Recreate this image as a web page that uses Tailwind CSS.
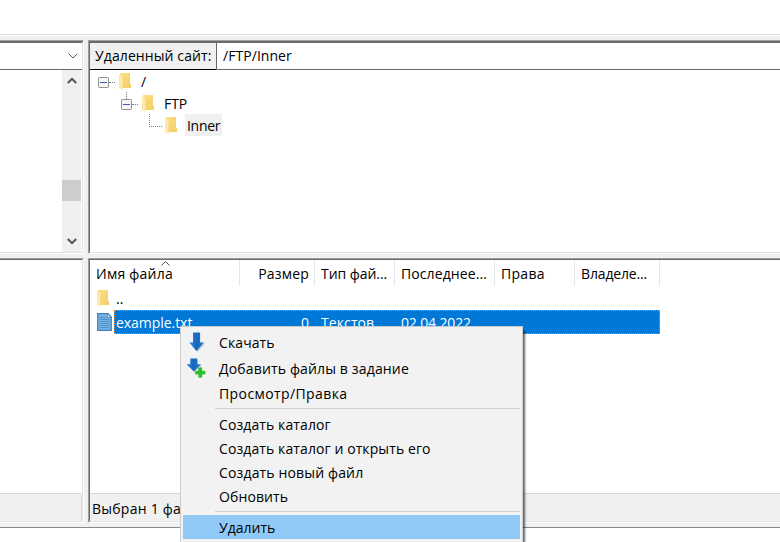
<!DOCTYPE html>
<html lang="ru">
<head>
<meta charset="utf-8">
<title>FTP</title>
<script src="https://cdn.jsdelivr.net/npm/@tailwindcss/browser@4"></script>
</head>
<body class="relative flex h-[542px] w-[780px] flex-col overflow-hidden bg-white font-['Open_Sans','Noto_Sans',sans-serif] text-[14px] leading-5 tracking-[0.1px] whitespace-nowrap text-black">
<svg class="absolute size-0" aria-hidden="true">
  <defs>
    <linearGradient id="gold" x2="1" y2="1"><stop stop-color="#fbe08b"/><stop offset="1" stop-color="#f3cd67"/></linearGradient>
    <linearGradient id="azure"><stop stop-color="#2a8ae2"/><stop offset=".5" stop-color="#1765bf"/><stop offset="1" stop-color="#2878d0"/></linearGradient>
    <symbol id="folder" viewBox="0 0 13 17">
      <path d="M1 0H11V11H12V15H1Z" fill="url(#gold)"/>
      <path d="M0 1L4 3.5V17L0 15Z" fill="#ffe9a6"/>
      <path d="M4 3.5V15" stroke="#efcb69" stroke-width=".6"/>
    </symbol>
    <symbol id="minus" viewBox="0 0 11 11">
      <rect x=".5" y=".5" width="10" height="10" rx=".7" fill="#f6f6f6" stroke="#919191"/>
      <path d="M2 5.5H9" stroke="#3f5fb0"/>
    </symbol>
  </defs>
</svg>

<div class="h-[34px] shrink-0"></div>
<div class="h-1.5 shrink-0 border-t border-[#e0e0e0] bg-[#f0f0f0] shadow-[inset_0_1px_0_#fff]"></div>

<div class="flex h-[214px] shrink-0 bg-[#f0f0f0]">
  <section class="flex w-[84px] flex-col border-t border-r border-b border-t-[#a0a0a0] border-r-white border-b-white">
    <div class="flex grow flex-col border-t-2 border-r border-b border-t-[#696969] border-r-[#e3e3e3] border-b-[#e3e3e3] bg-white">
      <div class="flex h-[27px] shrink-0 items-center justify-end border-b border-[#696969] pr-1">
        <svg class="h-[6px] w-[10px]" viewBox="0 0 10 6" fill="none" stroke="#555"><path d="M.7 .7L5 5L9.3 .7"/></svg>
      </div>
      <div class="flex grow justify-end">
        <div class="mr-px flex w-[19px] flex-col items-center bg-[#f0f0f0]">
          <svg class="mt-[7px] h-[7px] w-[10px] shrink-0" viewBox="0 0 10 7" fill="none" stroke="#505050" stroke-width="2"><path d="M.8 6L5 1.8L9.2 6"/></svg>
          <div class="mt-[96px] h-[21px] w-full shrink-0 bg-[#cdcdcd]"></div>
          <svg class="mt-[37px] h-[7px] w-[10px] shrink-0" viewBox="0 0 10 7" fill="none" stroke="#505050" stroke-width="2"><path d="M.8 1L5 5.2L9.2 1"/></svg>
        </div>
      </div>
    </div>
  </section>
  <div class="w-1 shrink-0"></div>
  <section class="flex grow border-t border-b border-l border-t-[#a0a0a0] border-b-white border-l-[#a0a0a0]">
    <div class="flex grow flex-col border-t-2 border-b border-l border-t-[#696969] border-b-[#e3e3e3] border-l-[#696969] bg-white">
      <div class="flex h-[27px] shrink-0">
        <div class="flex w-[126px] items-center border-b border-black bg-[#f0f0f0] pl-[5px]">Удаленный сайт:</div>
        <div class="flex grow items-center border-b border-l border-[#696969] pl-[6px] tracking-[0.05px]">/FTP/Inner</div>
      </div>
      <div class="flex h-[22px] items-center pt-[2px] pl-2">
        <svg class="size-[11px]"><use href="#minus"/></svg>
        <span class="w-[6px] border-t border-dotted border-[#808080]"></span>
        <svg class="mb-[2px] ml-1 h-[17px] w-[13px]"><use href="#folder"/></svg>
        <span class="ml-[9px]">/</span>
      </div>
      <div class="relative flex h-[22px] items-center pt-[2px] pl-[31px]">
        <span class="absolute top-0 left-[36px] h-[7px] border-l border-dotted border-[#808080]"></span>
        <svg class="size-[11px]"><use href="#minus"/></svg>
        <span class="w-[6px] border-t border-dotted border-[#808080]"></span>
        <svg class="mb-[2px] ml-1 h-[17px] w-[13px]"><use href="#folder"/></svg>
        <span class="ml-[9px] tracking-[-0.1px]">FTP</span>
      </div>
      <div class="flex h-[22px] pl-[59px]">
        <span class="h-[13px] w-[13px] border-b border-l border-dotted border-[#808080]"></span>
        <svg class="mt-[3px] ml-[3px] h-[17px] w-[13px]"><use href="#folder"/></svg>
        <span class="ml-[7px] h-[22px] w-[37px] bg-[#f0f0f0] pl-[2px] leading-[23px] tracking-[-0.3px]">Inner</span>
      </div>
    </div>
  </section>
</div>

<div class="h-1 shrink-0 bg-[#f0f0f0]"></div>

<div class="flex h-[265px] shrink-0 bg-[#f0f0f0]">
  <section class="flex w-[84px] border-t border-r border-b border-t-[#a0a0a0] border-r-white border-b-white">
    <div class="flex grow flex-col border-t border-r border-b border-t-[#696969] border-r-[#e3e3e3] border-b-[#e3e3e3] bg-white">
      <div class="grow"></div>
      <div class="flex h-7 items-center justify-end border-t border-[#d7d7d7] bg-[#f0f0f0]"><span class="h-[25px] w-px bg-[#d7d7d7]"></span></div>
    </div>
  </section>
  <div class="w-1 shrink-0"></div>
  <section class="flex grow border-t border-b border-l border-t-[#a0a0a0] border-b-white border-l-[#a0a0a0]">
    <div class="flex grow flex-col border-t border-b border-l border-t-[#696969] border-b-[#e3e3e3] border-l-[#696969] bg-white">
      <div class="grid h-[26px] w-[570px] grid-cols-[150px_75px_80px_100px_80px_85px] grid-rows-[26px] leading-[28px]">
        <div class="relative border-r border-[#e5e5e5] pl-[6px] tracking-[0.25px]">Имя файла
          <svg class="absolute top-[1px] left-[71px] h-[5px] w-[9px]" viewBox="0 0 9 5" fill="none" stroke="#555"><path d="M.4 4.5L4.5 .6L8.6 4.5"/></svg>
        </div>
        <div class="border-r border-[#e5e5e5] pr-[5px] text-right tracking-[0.2px]">Размер</div>
        <div class="border-r border-[#e5e5e5] pl-[6px] tracking-[-0.05px]">Тип фай...</div>
        <div class="border-r border-[#e5e5e5] pl-[6px]">Последнее...</div>
        <div class="border-r border-[#e5e5e5] pl-[6px] tracking-[0.3px]">Права</div>
        <div class="border-r border-[#e5e5e5] pl-[6px] tracking-[-0.15px]">Владеле...</div>
      </div>
      <div class="flex h-[24px] items-center pl-[7px]">
        <svg class="h-[17px] w-[13px]"><use href="#folder"/></svg>
        <span class="mt-[2px] ml-[6px]">..</span>
      </div>
      <div class="flex h-6 w-[570px]">
        <svg class="mt-[3px] ml-[6.5px] h-[18px] w-[15px] shrink-0" viewBox="0 0 15 18">
          <path d="M.7 .7H11L14.3 4V17.3H.7Z" fill="#77b3e4" stroke="#3f80bd" stroke-width="1.2"/>
          <path d="M10.5 .5V4.5H14.5Z" fill="#b8dbf5" stroke="#3f80bd" stroke-width=".7"/>
          <path d="M2.5 4.5H9M2.5 6.5H12.5M2.5 8.5H12.5M2.5 10.5H12.5M2.5 12.5H12.5M2.5 14.5H12.5" stroke="#4588c4" stroke-width=".8"/>
        </svg>
        <div class="ml-[2.5px] grid grow grid-cols-[125px_75px_80px_100px_164px] border border-dotted border-[#f08b32] bg-[#0078d7] leading-[24px] text-white">
          <span class="pl-[1px] tracking-[-0.05px]">example.txt</span>
          <span class="pr-[6px] text-right">0</span>
          <span class="pl-[6px]">Текстов</span>
          <span class="pl-[6px] tracking-[-0.15px]">02.04.2022</span>
        </div>
      </div>
      <div class="grow"></div>
      <div class="h-7 border-t border-[#d7d7d7] bg-[#f0f0f0] pl-[2px] leading-[30px] tracking-[0.25px]">Выбран 1 файл.</div>
    </div>
  </section>
</div>
<div class="h-[5px] shrink-0 border-b border-[#828790] bg-[#f0f0f0]"></div>

<nav class="absolute top-[326px] left-[180px] flex h-[230px] w-[343px] flex-col border border-[#ccc] bg-[#f2f2f2] p-[2px] shadow-[3px_4px_2px_-1px_rgba(0,0,0,0.6)]">
  <div class="flex h-[27px] items-center">
    <span class="flex w-[36px] pl-[6px]">
      <svg class="mb-[2px] h-5 w-[16px]" viewBox="0 0 16 20"><path d="M5.5 1.5H11.5V11.5H16L8.7 20L1.5 11.5H5.5Z" fill="#c9cdd2"/><path d="M4 .5H11V10.5H15L7.5 19L.3 10.5H4Z" fill="url(#azure)"/></svg>
    </span>
    Скачать
  </div>
  <div class="flex h-[26px] items-center tracking-[0.15px]">
    <span class="flex w-[36px] pl-[3px]">
      <svg class="mb-[2px] h-[20px] w-[20px]" viewBox="0 0 20 20"><path d="M5 1.5H12V7H16L9 14.5L1.5 7H5Z" fill="#c9cdd2"/><path d="M4.3 .5H11.3V6.2H15L7.8 13.5L.5 6.2H4.3Z" fill="url(#azure)"/><path d="M12.5 9.5H16V13H19.2V16.3H16V19.5H12.5V16.3H9.3V13H12.5Z" fill="#2bbd2b" stroke="#55cc55" stroke-width=".4"/></svg>
    </span>
    Добавить файлы в задание
  </div>
  <div class="h-6 pl-[36px] leading-6 tracking-[0.4px]">Просмотр/Правка</div>
  <div class="ml-8 h-[7px] pt-[2px]"><div class="h-px bg-[#d3d3d3]"></div></div>
  <div class="h-6 pl-[36px] leading-6">Создать каталог</div>
  <div class="h-6 pl-[36px] leading-6">Создать каталог и открыть его</div>
  <div class="h-6 pl-[36px] leading-6 tracking-[0.15px]">Создать новый файл</div>
  <div class="h-6 pl-[36px] leading-6">Обновить</div>
  <div class="ml-8 h-[6px] pt-[2px]"><div class="h-px bg-[#d3d3d3]"></div></div>
  <div class="h-6 w-[337px] bg-[#91c9f7] pl-[36px] leading-[26px] tracking-[0]">Удалить</div>
</nav>
</body>
</html>
